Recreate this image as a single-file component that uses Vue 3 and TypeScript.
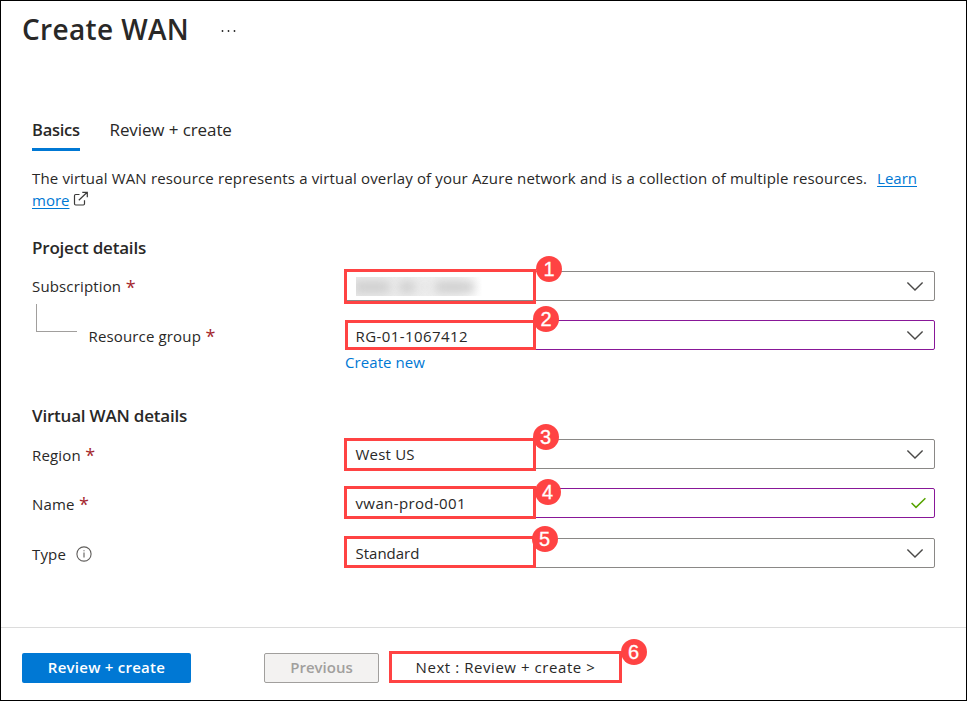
<script setup lang="ts">
interface Marker {
  step: number
  left: number
  top: number
  width: number
  height: number
  badgeX: number
  badgeY: number
}

interface Field {
  id: string
  label: string
  value: string
  required?: boolean
  info?: boolean
  redacted?: boolean
  edited?: boolean
  valid?: boolean
  nested?: boolean
  link?: string
  spacing: number
  marker: Marker
}

interface Section {
  title: string
  fields: Field[]
}

const sections: Section[] = [
  {
    title: 'Project details',
    fields: [
      { id: 'subscription', label: 'Subscription', value: '', required: true, redacted: true, spacing: 0,
        marker: { step: 1, left: -1, top: -2, width: 192, height: 35, badgeX: 204, badgeY: -2 } },
      { id: 'resource-group', label: 'Resource group', value: 'RG-01-1067412', required: true, edited: true, nested: true, link: 'Create new', spacing: 0.43,
        marker: { step: 2, left: 0, top: 0, width: 191, height: 30, badgeX: 201, badgeY: -1 } },
    ],
  },
  {
    title: 'Virtual WAN details',
    fields: [
      { id: 'region', label: 'Region', value: 'West US', required: true, spacing: 0.2,
        marker: { step: 3, left: -1, top: -1, width: 192, height: 33, badgeX: 200.5, badgeY: -2 } },
      { id: 'name', label: 'Name', value: 'vwan-prod-001', required: true, edited: true, valid: true, spacing: 0.38,
        marker: { step: 4, left: -1, top: -2, width: 192, height: 33, badgeX: 202.5, badgeY: 3.5 } },
      { id: 'type', label: 'Type', value: 'Standard', info: true, spacing: 0,
        marker: { step: 5, left: -1, top: -2, width: 192, height: 32, badgeX: 199.5, badgeY: 0.5 } },
    ],
  },
]

const nextMarker: Marker = { step: 6, left: 0, top: -2, width: 233, height: 32, badgeX: 244.5, badgeY: -1.5 }

const boxStyle = (m: Marker) => ({
  left: `${m.left}px`,
  top: `${m.top}px`,
  width: `${m.width}px`,
  height: `${m.height}px`,
})
const badgeStyle = (m: Marker) => ({ left: `${m.badgeX}px`, top: `${m.badgeY}px` })
</script>

<template>
  <main class="page">
    <header class="header">
      <h1>Create WAN</h1>
      <svg class="more" width="16" height="4" viewBox="0 0 16 4" aria-hidden="true">
        <circle cx="1.5" cy="2" r="0.9" /><circle cx="7.5" cy="2" r="0.9" /><circle cx="13.5" cy="2" r="0.9" />
      </svg>
    </header>

    <nav class="tabs">
      <a class="tab active">Basics</a>
      <a class="tab">Review + create</a>
    </nav>

    <p class="intro">
      <span>The virtual WAN resource represents a virtual overlay of your Azure network and is a collection of multiple resources.</span>
      <a class="learn">Learn<br />more</a><svg class="external" width="16" height="16" viewBox="0 0 16 16" aria-hidden="true">
        <path d="M6.5 3.5H2.7Q1.5 3.5 1.5 4.7V12.8Q1.5 14 2.7 14H10.3Q11.5 14 11.5 12.8V9.3M5.8 9.2L14.2 1.3M9.3 1.3H14.3V6.3" />
      </svg>
    </p>

    <section v-for="section in sections" :key="section.title" class="section">
      <h2>{{ section.title }}</h2>
      <div v-for="field in section.fields" :key="field.id" class="row" :class="['row-' + field.id, { nested: field.nested }]">
        <div class="label">
          <span v-if="field.nested" class="branch"></span>
          <span :class="'label-' + field.id">{{ field.label }}</span>
          <span v-if="field.required" class="required">*</span>
          <svg v-if="field.info" class="info" width="16" height="16" viewBox="0 0 16 16" aria-hidden="true">
            <circle cx="8" cy="8" r="7.1" /><path d="M8 6.5V11.5M8 4.3V5.3" />
          </svg>
        </div>
        <div class="control">
          <div class="input" :class="{ edited: field.edited }">
            <span v-if="field.redacted" class="redacted"><i class="smudge one"></i><i class="smudge two"></i><i class="smudge three"></i><i class="smudge four"></i></span>
            <span v-else class="value" :style="{ letterSpacing: field.spacing + 'px' }">{{ field.value }}</span>
            <svg v-if="field.valid" class="check" width="16" height="12" viewBox="0 0 16 12" aria-hidden="true">
              <path d="M1.6 6L6 10.4L15.4 1.2" />
            </svg>
            <svg v-else class="chevron" width="18" height="12" viewBox="0 0 18 12" aria-hidden="true">
              <path d="M1.4 2.5L9 10.1L16.6 2.5" />
            </svg>
          </div>
          <a v-if="field.link" class="create">{{ field.link }}</a>
          <div class="highlight" :style="boxStyle(field.marker)"></div>
          <div class="badge" :style="badgeStyle(field.marker)">{{ field.marker.step }}</div>
        </div>
      </div>
    </section>

    <footer class="footer">
      <button class="button primary">Review + create</button>
      <button class="button previous" disabled>Previous</button>
      <div class="next-wrap">
        <button class="button next">Next : Review + create &gt;</button>
        <div class="highlight" :style="boxStyle(nextMarker)"></div>
        <div class="badge" :style="badgeStyle(nextMarker)">{{ nextMarker.step }}</div>
      </div>
    </footer>
  </main>
</template>

<style>
body {
  background: #fff;
}
</style>

<style scoped>
.page {
  box-sizing: border-box;
  width: 967px;
  height: 701px;
  border: 1px solid #000;
  background: #fff;
  color: #292827;
  font: 400 15px/22px "Open Sans", "Noto Sans", sans-serif;
  display: flex;
  flex-direction: column;
  overflow: hidden;
}

.header {
  display: flex;
  align-items: center;
  height: 60px;
  padding-left: 21px;
  gap: 32px;
}

h1 {
  margin: -4px 0 0;
  font-size: 28px;
  font-weight: 600;
  line-height: 40px;
  letter-spacing: 0.35px;
  width: 167px;
  white-space: nowrap;
}

.more {
  fill: #222;
}

.tabs {
  display: flex;
  gap: 29.5px;
  padding: 53px 0 0 31px;
  height: 90px;
  box-sizing: border-box;
}

.tab {
  box-sizing: border-box;
  height: 37px;
  font-size: 17px;
  line-height: 32px;
  letter-spacing: -0.1px;
}

.active {
  width: 48px;
  font-weight: 600;
  font-size: 16.5px;
  letter-spacing: -0.25px;
  border-bottom: 3px solid #0078d4;
}

.intro {
  height: 44px;
  margin: 16px 0 0;
  padding-left: 31px;
  white-space: nowrap;
}

.intro span {
  letter-spacing: 0.163px;
  margin-right: 10px;
}

a {
  color: inherit;
}

.learn {
  color: #0078d4;
  text-decoration: underline;
  text-underline-offset: 2px;
}

.external {
  margin-left: 4px;
  vertical-align: -1px;
  fill: none;
  stroke: #3b3a39;
  stroke-width: 1.2;
}

.section {
  padding-left: 31px;
}

h2 {
  margin: 25px 0 11px;
  font-size: 17px;
  font-weight: 600;
  line-height: 24px;
  letter-spacing: -0.2px;
}

.row {
  display: flex;
  align-items: flex-start;
  height: 30px;
  margin-bottom: 19px;
}

.nested {
  height: 59px;
  margin-bottom: 0;
}

.row-type {
  margin-top: 20px;
}

.label {
  display: flex;
  width: 313px;
  line-height: 32px;
  letter-spacing: 0.15px;
}

.label-subscription {
  position: relative;
  top: -1px;
}

.required {
  margin-left: 4.5px;
  color: #a4262c;
  font-size: 18px;
  line-height: 33px;
}

.info {
  margin: 8px 0 0 10.5px;
  fill: none;
  stroke: #605e5c;
  stroke-width: 1.1;
}

.branch {
  box-sizing: border-box;
  width: 41px;
  height: 28px;
  margin: -16px 11.5px 0 4px;
  border: solid #a19f9d;
  border-width: 0 0 1px 1px;
}

.control {
  position: relative;
  width: 590px;
}

.input {
  box-sizing: border-box;
  display: flex;
  align-items: center;
  justify-content: space-between;
  height: 30px;
  padding: 0 10px 0 9.5px;
  border: 1px solid #8a8886;
  border-radius: 2px;
}

.edited {
  border-color: #881798;
}

.value {
  line-height: 28px;
}

.nested .value {
  position: relative;
  top: 1px;
}

.chevron {
  fill: none;
  stroke: #4a4948;
  stroke-width: 1.4;
}

.check {
  margin-right: -2px;
  fill: none;
  stroke: #57a300;
  stroke-width: 1.5;
}

.redacted {
  position: relative;
  width: 126px;
  height: 19px;
  overflow: hidden;
  background: linear-gradient(90deg, #e9e9e9 0%, #f0f0f0 80%, #fff 100%);
}

.smudge {
  position: absolute;
  top: 4px;
  height: 12px;
  border-radius: 4px;
  background: #cfcfcf;
  filter: blur(5px);
}

.one {
  left: -2px;
  width: 36px;
}

.two {
  left: 43px;
  width: 16px;
}

.three {
  left: 66px;
  top: 8px;
  width: 6px;
  height: 3px;
}

.four {
  left: 79px;
  width: 39px;
}

.create {
  display: block;
  height: 22px;
  margin-top: 1px;
  color: #0078d4;
  letter-spacing: 0.08px;
}

.highlight {
  position: absolute;
  box-sizing: border-box;
  border: 3px solid #ff4343;
}

.badge {
  position: absolute;
  width: 26px;
  height: 26px;
  margin: -13px 0 0 -13px;
  border-radius: 50%;
  background: #ff4343;
  color: #fff;
  font: 400 20px/26px "Liberation Sans", Arial, sans-serif;
  -webkit-text-stroke: 0.3px #fff;
  text-align: center;
}

.footer {
  display: flex;
  box-sizing: border-box;
  height: 73px;
  margin-top: auto;
  padding: 25px 0 0 21px;
  border-top: 1px solid #dcdcdc;
}

.button {
  box-sizing: border-box;
  height: 30px;
  padding: 0 0 2px;
  border: 1px solid transparent;
  border-radius: 2px;
  background: #fff;
  color: #292827;
  font: 600 15px/26px "Open Sans", "Noto Sans", sans-serif;
  white-space: nowrap;
}

.primary {
  width: 169px;
  background: #0078d4;
  color: #fff;
  letter-spacing: 0.25px;
}

.previous {
  width: 115px;
  margin-left: 73px;
  border-color: #a19f9d;
  background: #f3f2f1;
  color: #a19f9d;
}

.next-wrap {
  position: relative;
  width: 233px;
  margin-left: 10px;
}

.next {
  width: 233px;
  font-weight: 500;
  letter-spacing: 0.56px;
}
</style>
